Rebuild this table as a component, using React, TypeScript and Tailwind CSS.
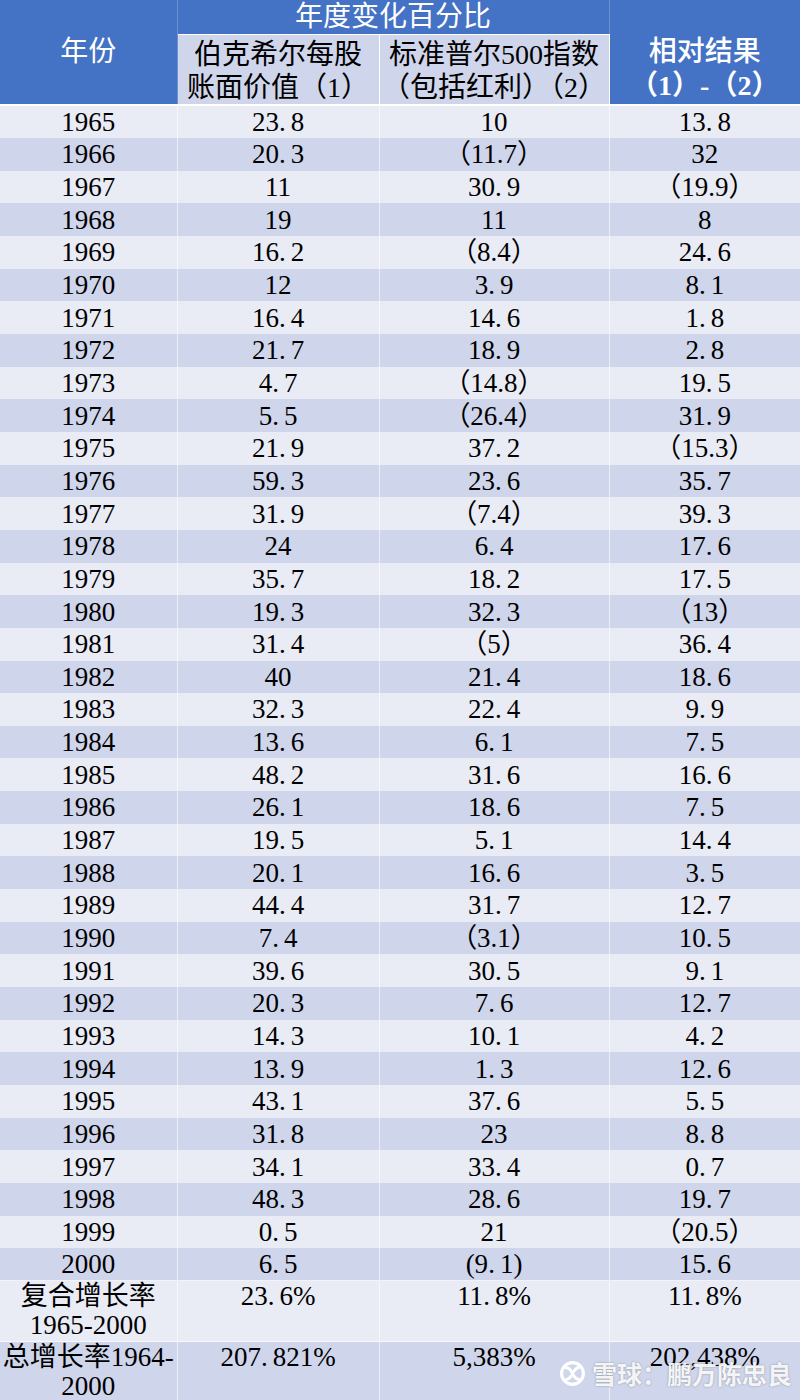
const rows: [string, string, string, string][] = [
  ["1965", "23.8", "10", "13.8"],
  ["1966", "20.3", "（11.7）", "32"],
  ["1967", "11", "30.9", "（19.9）"],
  ["1968", "19", "11", "8"],
  ["1969", "16.2", "（8.4）", "24.6"],
  ["1970", "12", "3.9", "8.1"],
  ["1971", "16.4", "14.6", "1.8"],
  ["1972", "21.7", "18.9", "2.8"],
  ["1973", "4.7", "（14.8）", "19.5"],
  ["1974", "5.5", "（26.4）", "31.9"],
  ["1975", "21.9", "37.2", "（15.3）"],
  ["1976", "59.3", "23.6", "35.7"],
  ["1977", "31.9", "（7.4）", "39.3"],
  ["1978", "24", "6.4", "17.6"],
  ["1979", "35.7", "18.2", "17.5"],
  ["1980", "19.3", "32.3", "（13）"],
  ["1981", "31.4", "（5）", "36.4"],
  ["1982", "40", "21.4", "18.6"],
  ["1983", "32.3", "22.4", "9.9"],
  ["1984", "13.6", "6.1", "7.5"],
  ["1985", "48.2", "31.6", "16.6"],
  ["1986", "26.1", "18.6", "7.5"],
  ["1987", "19.5", "5.1", "14.4"],
  ["1988", "20.1", "16.6", "3.5"],
  ["1989", "44.4", "31.7", "12.7"],
  ["1990", "7.4", "（3.1）", "10.5"],
  ["1991", "39.6", "30.5", "9.1"],
  ["1992", "20.3", "7.6", "12.7"],
  ["1993", "14.3", "10.1", "4.2"],
  ["1994", "13.9", "1.3", "12.6"],
  ["1995", "43.1", "37.6", "5.5"],
  ["1996", "31.8", "23", "8.8"],
  ["1997", "34.1", "33.4", "0.7"],
  ["1998", "48.3", "28.6", "19.7"],
  ["1999", "0.5", "21", "（20.5）"],
  ["2000", "6.5", "(9.1)", "15.6"],
];

const totals: [string, string, string, string][] = [
  ["复合增长率 1965-2000", "23.6%", "11.8%", "11.8%"],
  ["总增长率1964- 2000", "207.821%", "5,383%", "202,438%"],
];

function Num({ v }: { v: string }) {
  return <>{v.split(".").map((p, i) => (i === 0 ? p : <span key={i}><span className="mr-[5px]">.</span>{p}</span>))}</>;
}

function XueqiuLogo() {
  return (
    <svg width="27" height="27" viewBox="0 0 26 26" fill="none" stroke="white" strokeWidth="3" strokeLinecap="round">
      <circle cx="13" cy="13" r="10.5" />
      <path d="M7 7.5c3.5 0 5 3.5 6 5.5s2.5 5.5 6 5.5" />
      <path d="M7.5 18.5c2 0 3.2-1.6 4.2-3" />
      <path d="M14.3 11c1-1.5 2.2-3.5 4.2-3.5" />
    </svg>
  );
}

export default function App() {
  return (
    <div className="relative w-[800px] h-[1400px] overflow-hidden bg-[#e9ebf5] text-black font-['Liberation_Serif','Noto_Sans_CJK_SC',serif]">
      <table className="w-[800px] table-fixed border-collapse text-[27px] text-center font-['Liberation_Serif','Noto_Sans_CJK_SC',serif]">
        <colgroup>
          <col className="w-[177px]" />
          <col className="w-[202px]" />
          <col className="w-[230px]" />
          <col className="w-[191px]" />
        </colgroup>
        <thead>
          <tr className="h-[34px]">
            <th rowSpan={2} className="bg-[#4472c4] text-white text-[28px] font-normal border-r border-[#6b8fd2] border-b-2 border-b-white">
              年份
            </th>
            <th colSpan={2} className="bg-[#4472c4] text-white text-[28px] font-normal leading-[34px] border-r border-[#6b8fd2] border-b border-b-white">
              年度变化百分比
            </th>
            <th rowSpan={2} className="bg-[#4472c4] text-white text-[28px] font-medium leading-[34px] align-bottom pb-[1px] border-b-2 border-b-white">
              相对结果
              <br />
              <span className="font-bold">（1）-（2）</span>
            </th>
          </tr>
          <tr className="h-[69px]">
            <th className="bg-[#cfd5ea] text-[28px] font-normal leading-[33px] pt-[3px] border-l border-r border-white border-b-2 border-b-white">
              伯克希尔每股
              <br />
              账面价值（1）
            </th>
            <th className="bg-[#cfd5ea] text-[28px] font-normal leading-[33px] pt-[3px] whitespace-nowrap border-r border-white border-b-2 border-b-white">
              标准普尔500指数
              <br />
              （包括红利）（2）
            </th>
          </tr>
        </thead>
        <tbody>
          {rows.map((r, i) => (
            <tr key={r[0]} className={`h-[32.67px] ${i % 2 === 0 ? "bg-[#e9ebf5]" : "bg-[#cfd5ea]"}`}>
              {r.map((c, j) => (
                <td key={j} className={`p-0 leading-[32px] ${j < 3 ? "border-r border-white/60" : ""}`}>
                  {c.startsWith("（") ? c : <Num v={c} />}
                </td>
              ))}
            </tr>
          ))}
          {totals.map((r, i) => (
            <tr key={r[0]} className={`h-[61px] align-top ${i % 2 === 0 ? "bg-[#e9ebf5]" : "bg-[#cfd5ea]"} border-t border-white/70`}>
              {r.map((c, j) => (
                <td key={j} className={`p-0 pt-[1px] leading-[29px] ${j < 3 ? "border-r border-white/60" : ""}`}>
                  {j === 0 ? (
                    <>
                      {c.split(" ")[0]}
                      <br />
                      {c.split(" ")[1]}
                    </>
                  ) : (
                    <Num v={c} />
                  )}
                </td>
              ))}
            </tr>
          ))}
        </tbody>
      </table>

      <div
        className="absolute left-[559px] top-[1358px] flex items-center gap-[6px] text-white/90 text-[25px] font-bold font-['Noto_Sans_CJK_SC',sans-serif]"
        style={{ textShadow: "0 0 2px rgba(0,0,0,0.35)" }}
      >
        <XueqiuLogo />
        <span className="leading-[30px]">雪球：鹏万陈忠良</span>
      </div>
    </div>
  );
}
